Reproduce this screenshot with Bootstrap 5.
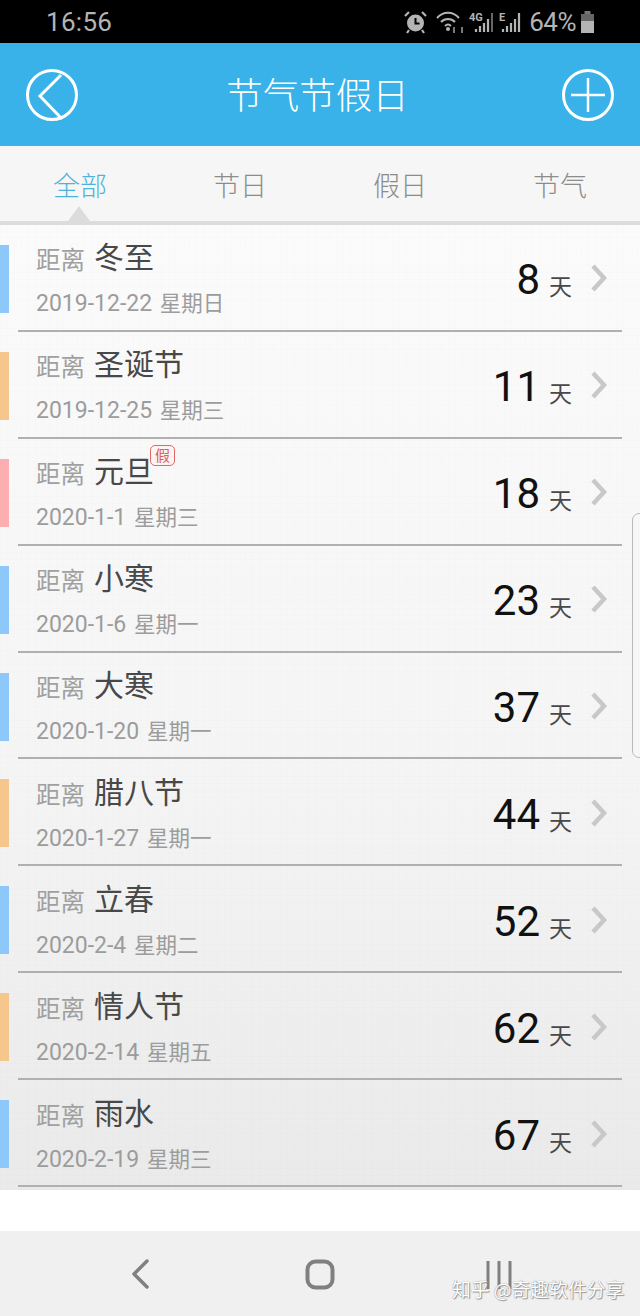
<!DOCTYPE html>
<html lang="zh">
<head>
    <meta charset="UTF-8">
    <meta name="viewport" content="width=device-width, initial-scale=1.0">
    <title>节气节假日</title>
    <link href="https://cdn.jsdelivr.net/npm/bootstrap@5.3.0/dist/css/bootstrap.min.css" rel="stylesheet">
    <style>
        html, body { width: 640px; height: 1316px; overflow: hidden; }
        body { position: relative; background: #fff; font-family: Roboto, "Noto Sans CJK SC", sans-serif; }
        .cjk { font-family: "Noto Sans CJK SC", sans-serif; font-weight: 400; }

        .status-strip { height: 43px; background: #000; color: #b4b4b4; padding: 1px 45px 0 46px; }
        .clock { font-size: 26px; letter-spacing: .3px; }
        .net-label { font: 700 11px Roboto, sans-serif; fill: #b4b4b4; }
        .batt-text { font-size: 26px; line-height: 1; letter-spacing: -.5px; }

        .app-head { height: 103px; background: #38b2e8; color: #fff; padding: 0 25px; }
        .app-title { font-size: 36.500px; line-height: 1; margin: 0 0 0 -5px; font-weight: 300; }

        .tab-strip { height: 75px; background: #f6f6f6; color: #8c8c8c; font-size: 27px; font-weight: 300; padding-top: 4px; }
        .tab-on { color: #4fb3d9; position: relative; }
        .tab-on::after { content: ""; position: absolute; left: 68px; bottom: 0; border: solid transparent; border-width: 0 11.5px 15px; border-bottom-color: #dcdcdc; }
        .tab-rule { height: 4px; background: #dcdcdc; }

        .day-list {
            height: 965px;
            padding-right: 18px;
            background:
                repeating-linear-gradient(0deg, rgba(0,0,0,.008) 0 1px, transparent 1px 7px),
                repeating-linear-gradient(90deg, rgba(0,0,0,.008) 0 1px, transparent 1px 7px),
                linear-gradient(#fcfbfb, #f5f5f5 55%, #eaeaea);
        }
        .day-row { height: 106.9px; }
        .day-mark { width: 9px; height: 68px; flex: none; margin: 1px 9px 0 0; }
        .mark-jq { background: #8ec8fb; }
        .mark-jr { background: #f6c78c; }
        .mark-jia { background: #fdaeb0; }
        .day-body { height: 100%; padding-left: 18px; border-bottom: 2px solid #b0b0b0; }
        .day-text { padding-top: 3px; }
        .day-top { line-height: 36px; height: 36px; white-space: nowrap; }
        .day-pre { font-size: 24.500px; color: #a0a0a0; margin-right: 9px; }
        .day-name { font-size: 30px; color: #484848; position: relative; top: -1px; }
        .day-date { font-size: 23px; color: #9c9c9c; line-height: 30px; margin-top: 15px; white-space: nowrap; word-spacing: 2px; }
        .day-week { font-size: 21.500px; }
        .jia-tag {
            position: absolute; left: 100%; top: -2px; margin-left: -4px;
            width: 25px; height: 21px; border: 1px solid #dd6b63; border-radius: 5px;
            color: #d9635c; background: #fdf3f2; font-size: 15px; line-height: 18px; text-align: center;
        }
        .day-num { font-size: 42px; line-height: 1; color: #111; position: relative; top: 3px; }
        .day-unit { font-size: 23px; line-height: 1; color: #484848; margin: 0 18px 0 9px; position: relative; top: -1px; }
        .day-go { margin-right: 14px; position: relative; top: -6px; }

        .page-gap { height: 41px; background: #fff; }
        .soft-nav { height: 85px; background: #f0f0f0; }
        .edge-grip { position: absolute; right: -2px; top: 513px; width: 10px; height: 245px; background: #f7f7f7; border: 1px solid #bbb; border-radius: 7px 0 0 7px; }
        .water-mark { position: absolute; left: 452px; top: 1276px; font-size: 18.800px; line-height: 26px; color: #fff; text-shadow: 0 0 1px #777, 1px 1px 1px #999; white-space: nowrap; }
    </style>
</head>
<body>
    <div class="status-strip d-flex align-items-center">
        <span class="clock">16:56</span>
        <div class="ms-auto d-flex align-items-center">
            <svg width="25" height="24" viewBox="0 0 25 24" class="me-2"><circle cx="12.5" cy="13" r="8.500" fill="#b4b4b4"/><path d="M12.5 8v5.500h4" fill="none" stroke="#000" stroke-width="2"/><path d="M2 6l4-4M23 6l-4-4M6 20l-2 3M19 20l2 3" stroke="#b4b4b4" stroke-width="2.200"/></svg>
            <svg width="29" height="24" viewBox="0 0 29 24"><g fill="none" stroke="#b4b4b4" stroke-width="2"><path d="M1 8c6-7 16-7 22 0"/><path d="M5 12c4-4 10-4 14 0"/><path d="M9 16c2-2 4-2 6 0"/></g><circle cx="12" cy="19" r="2" fill="#b4b4b4"/><path d="M18 17v6M26 23v-6" stroke="#777" stroke-width="2"/></svg>
            <svg width="26" height="24" viewBox="0 0 26 24" class="ms-1"><text x="0" y="10.500" class="net-label">4G</text><path d="M7 22v-3M11 22v-6M15 22v-9M19 22V9" stroke="#b4b4b4" stroke-width="2.200"/><path d="M23 22V3" stroke="#666" stroke-width="2"/></svg>
            <svg width="22" height="24" viewBox="0 0 22 24" class="ms-1"><text x="0" y="10.500" class="net-label">E</text><path d="M4 22v-3M8 22v-6M12 22v-9M16 22V9M20 22V3" stroke="#b4b4b4" stroke-width="2.200"/></svg>
            <span class="batt-text ms-2">64%</span>
            <svg width="15" height="24" viewBox="0 0 15 24" class="ms-1"><path d="M4.500 1h6v3h-6z" fill="#777"/><path d="M1 4h13v7H1z" fill="#666"/><path d="M1 11h13v12H1z" fill="#b4b4b4"/></svg>
        </div>
    </div>

    <div class="app-head d-flex align-items-center justify-content-between">
        <svg width="54" height="54" viewBox="0 0 54 54"><circle cx="27" cy="27" r="24.500" fill="none" stroke="#fff" stroke-width="3"/><path d="M36 7L15 28l22 23" fill="none" stroke="#fff" stroke-width="3"/></svg>
        <div class="app-title cjk">节气节假日</div>
        <svg width="54" height="54" viewBox="0 0 54 54"><circle cx="27" cy="27" r="24.500" fill="none" stroke="#fff" stroke-width="3"/><path d="M27 10v34M10 27h34" fill="none" stroke="#fff" stroke-width="2.500"/></svg>
    </div>

    <div class="row g-0 tab-strip text-center cjk">
        <div class="col-3 tab-on d-flex align-items-center justify-content-center"><span>全部</span></div>
        <div class="col-3 d-flex align-items-center justify-content-center"><span>节日</span></div>
        <div class="col-3 d-flex align-items-center justify-content-center"><span>假日</span></div>
        <div class="col-3 d-flex align-items-center justify-content-center"><span>节气</span></div>
    </div>
    <div class="tab-rule"></div>

    <div class="day-list" id="day-list"></div>

    <div class="page-gap"></div>
    <div class="soft-nav d-flex align-items-center">
        <svg width="640" height="85" viewBox="0 0 640 85">
            <path d="M147 30l-13 13 13 13" fill="none" stroke="#808080" stroke-width="3.500" stroke-linecap="round" stroke-linejoin="round"/>
            <rect x="307.500" y="30.500" width="25" height="26" rx="8" fill="none" stroke="#808080" stroke-width="4"/>
            <path d="M488 30v28M499 30v28M510 30v28" stroke="#808080" stroke-width="3"/>
        </svg>
    </div>

    <div class="edge-grip"></div>
    <div class="water-mark cjk">知乎 @奇趣软件分享</div>

    <script>
        const days = [
            ['冬至', '2019-12-22', '星期日', 8, 'mark-jq'],
            ['圣诞节', '2019-12-25', '星期三', 11, 'mark-jr'],
            ['元旦', '2020-1-1', '星期三', 18, 'mark-jia', true],
            ['小寒', '2020-1-6', '星期一', 23, 'mark-jq'],
            ['大寒', '2020-1-20', '星期一', 37, 'mark-jq'],
            ['腊八节', '2020-1-27', '星期一', 44, 'mark-jr'],
            ['立春', '2020-2-4', '星期二', 52, 'mark-jq'],
            ['情人节', '2020-2-14', '星期五', 62, 'mark-jr'],
            ['雨水', '2020-2-19', '星期三', 67, 'mark-jq'],
        ];

        const list = document.getElementById('day-list');
        days.forEach(([name, date, week, left, mark, off]) => {
            const tag = off ? '<span class="jia-tag cjk">假</span>' : '';
            list.innerHTML += `
                <div class="day-row d-flex align-items-center">
                    <div class="day-mark ${mark}"></div>
                    <div class="day-body flex-fill d-flex align-items-center justify-content-between">
                        <div class="day-text">
                            <div class="day-top cjk"><span class="day-pre">距离</span><span class="day-name">${name}${tag}</span></div>
                            <div class="day-date">${date} <span class="day-week">${week}</span></div>
                        </div>
                        <div class="d-flex align-items-end">
                            <span class="day-num">${left}</span>
                            <span class="day-unit cjk">天</span>
                            <svg class="day-go" width="18" height="28" viewBox="0 0 18 28"><path d="M3 2l11 12L3 26" fill="none" stroke="#c8c8c8" stroke-width="4.500"/></svg>
                        </div>
                    </div>
                </div>`;
        });
    </script>
</body>
</html>
